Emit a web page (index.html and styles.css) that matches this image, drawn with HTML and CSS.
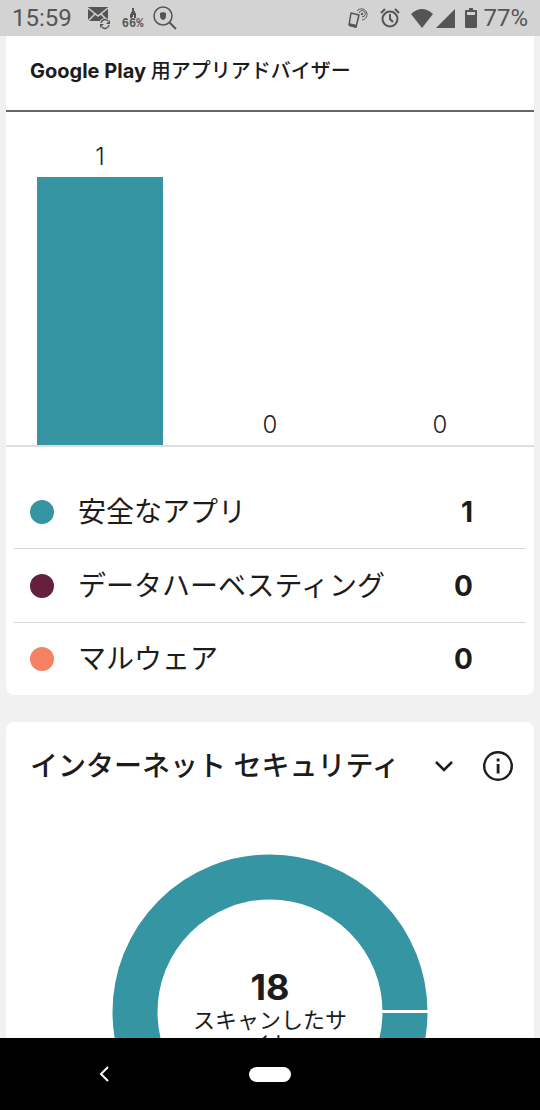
FILE: index.html
```html
<!DOCTYPE html>
<html lang="ja">

<head>
  <meta charset="UTF-8">
  <meta name="viewport" content="width=device-width, initial-scale=1.0">
  <title>アプリアドバイザー</title>
  <link rel="stylesheet" href="styles.css">
</head>

<body>
  <header class="status">
    <span class="time">15:59</span>
    <svg class="icon mail" width="24" height="24" viewBox="0 0 24 24">
      <path d="M1 1h20v14H1z" fill="#555" />
      <path d="M1 2l10 8 10-8M1 15l7-7M21 15l-7-7" fill="none" stroke="#d3d3d3" stroke-width="1.5" />
      <circle cx="18" cy="18" r="6" fill="#d3d3d3" />
      <path d="M14 17a4 4 0 0 1 7-2M22 19a4 4 0 0 1-7 2" fill="none" stroke="#555" stroke-width="1.5" />
      <path d="M23 14v4h-4zM13 22v-4h4z" fill="#555" />
    </svg>
    <span class="usage">
      <svg width="10" height="11" viewBox="0 0 10 11">
        <path d="M4 0h2v3h1v2h1v5H6V7H5v2H4v1H2V6h1V4h1z" fill="#555" />
      </svg>
      <b>66%</b>
    </span>
    <svg class="icon search" width="24" height="24" viewBox="0 0 24 24">
      <circle cx="10" cy="10" r="9" fill="none" stroke="#555" stroke-width="1.5" />
      <path d="M16 16l7 7" stroke="#555" stroke-width="2" />
      <path d="M10 6l3 1v3q0 3-3 4-3-1-3-4V7z" fill="#555" />
    </svg>
    <div class="right">
      <svg width="20" height="22" viewBox="0 0 20 22">
        <path d="M3 6l8 2-3 12-7-2z" fill="none" stroke="#555" stroke-width="1.5" stroke-linejoin="round" />
        <path d="M1 16l8 2-1 3-7-2z" fill="#555" />
        <circle cx="14" cy="7" r="1.2" fill="#555" />
        <path d="M11 6a3.2 3.2 0 1 1 3 4M9 4a5.6 5.6 0 1 1 5 9" fill="none" stroke="#555" />
      </svg>
      <svg class="alarm" width="20" height="20" viewBox="0 0 20 20">
        <circle cx="10" cy="11" r="7.5" fill="none" stroke="#555" stroke-width="2" />
        <path d="M10 6v5l3 3M1 5l4-4M19 5l-4-4" fill="none" stroke="#555" stroke-width="2" />
      </svg>
      <svg class="wifi" width="22" height="19" viewBox="0 0 22 19">
        <path d="M0 5q11-10 22 0L11 19z" fill="#555" />
      </svg>
      <svg class="signal" width="19" height="19" viewBox="0 0 19 19">
        <path d="M19 0v19H0z" fill="#555" />
      </svg>
      <svg class="battery" width="12" height="20" viewBox="0 0 12 20">
        <path d="M4 0h4v2h3q1 0 1 1v16q0 1-1 1H1q-1 0-1-1V3q0-1 1-1h3z" fill="#555" />
        <path d="M2 4h8v3H2z" fill="#d3d3d3" />
      </svg>
      <span class="percent">77%</span>
    </div>
  </header>

  <main class="content">
    <section class="card advisor">
      <h2>Google Play <span>用アプリアドバイザー</span></h2>
      <div class="chart">
        <div class="col">
          <span>1</span>
          <div class="bar" style="height: 268px"></div>
        </div>
        <div class="col"><span>0</span></div>
        <div class="col"><span>0</span></div>
      </div>
      <ul class="list">
        <li>
          <i class="dot safe"></i>
          <span class="text">安全なアプリ</span>
          <b>1</b>
        </li>
        <li>
          <i class="dot data"></i>
          <span class="text">データハーベスティング</span>
          <b>0</b>
        </li>
        <li>
          <i class="dot malware"></i>
          <span class="text">マルウェア</span>
          <b>0</b>
        </li>
      </ul>
    </section>

    <section class="card internet">
      <div class="head">
        <h2>インターネット セキュリティ</h2>
        <button class="toggle" aria-label="期間">
          <svg width="18" height="12" viewBox="0 0 18 12">
            <path d="M1 2l8 8 8-8" fill="none" stroke="#1c1c1c" stroke-width="2.6" />
          </svg>
        </button>
        <button class="info" aria-label="情報">
          <svg width="30" height="30" viewBox="0 0 30 30">
            <circle cx="15" cy="15" r="13.8" fill="none" stroke="#1c1c1c" stroke-width="2.4" />
            <path d="M13.7 7.6h2.8v2.8h-2.8zM13.7 13h2.8v9.5h-2.8z" fill="#1c1c1c" />
          </svg>
        </button>
      </div>
      <div class="donut">
        <svg width="316" height="316" viewBox="0 0 316 316">
          <circle cx="158" cy="158" r="135" fill="none" stroke="#3595a2" stroke-width="45" />
          <path d="M268 157.5h48" stroke="#fff" stroke-width="3" />
        </svg>
        <div class="total">
          <b>18</b>
          <p>スキャンしたサイト</p>
        </div>
      </div>
    </section>
  </main>

  <nav class="navbar">
    <button class="back" aria-label="戻る">
      <svg width="10" height="16" viewBox="0 0 10 16">
        <path d="M9 1L2 8l7 7" fill="none" stroke="#fff" stroke-width="2" />
      </svg>
    </button>
    <button class="home" aria-label="ホーム"></button>
    <span></span>
  </nav>
</body>

</html>
```
FILE: styles.css
```css
* {
  box-sizing: border-box;
  margin: 0;
  padding: 0;
}

body {
  display: flex;
  flex-direction: column;
  height: 100vh;
  overflow: hidden;
  background: #f1f1f1;
  color: #1c1c1c;
  font-family: Inter, "Noto Sans CJK JP", sans-serif;
}

svg {
  display: block;
}

button {
  border: none;
  background: none;
  cursor: pointer;
}

/* status bar */
.status {
  flex: none;
  display: flex;
  align-items: center;
  height: 36px;
  padding: 0 12px;
  background: #d3d3d3;
  color: #555;
  font-family: Roboto, sans-serif;
  font-size: 24px;
}

.status .mail {
  margin-left: 15px;
}

.status .usage {
  display: flex;
  flex-direction: column;
  align-items: center;
  margin: 0 10px 0 11px;
}

.status .usage b {
  font-family: "Liberation Mono", monospace;
  font-size: 12px;
  line-height: 10px;
}

.status .right {
  display: flex;
  align-items: center;
  margin-left: auto;
}

.status .alarm {
  margin: 0 11px 0 12px;
}

.status .signal {
  margin: 0 10px 0 3px;
}

.status .percent {
  margin-left: 6px;
}

/* cards */
.content {
  flex: 1;
  min-height: 0;
  overflow: hidden;
  padding: 0 6px;
}

.card {
  background: #fff;
  border-radius: 8px;
}

.advisor {
  border-radius: 0 0 8px 8px;
  margin-bottom: 27px;
}

.advisor h2 {
  padding: 20px 24px 24px;
  border-bottom: 2px solid #666;
  font-size: 20px;
  line-height: 30px;
}

.advisor h2 span {
  font-weight: 500;
}

.chart {
  display: flex;
  align-items: flex-end;
  height: 335px;
  padding: 0 9px;
  border-bottom: 2px solid #dedede;
}

.chart .col {
  flex: 1;
  display: flex;
  flex-direction: column;
  align-items: center;
  font-size: 24px;
  font-weight: 300;
  line-height: 40px;
}

.chart .bar {
  width: 74%;
  background: #3595a2;
}

.list {
  list-style: none;
  padding: 28px 8px 0;
}

.list li {
  display: flex;
  align-items: center;
  height: 74px;
  padding: 0 53px 0 16px;
  border-bottom: 1px solid #d6d6d6;
  font-size: 28px;
}

.list li:last-child {
  height: 72px;
  border-bottom: none;
}

.list .dot {
  width: 24px;
  height: 24px;
  margin-right: 24px;
  border-radius: 50%;
}

.list .safe {
  background: #3595a2;
}

.list .data {
  background: #66203f;
}

.list .malware {
  background: #f58263;
}

.list .text {
  flex: 1;
  padding-bottom: 4px;
}

/* internet security */
.internet .head {
  display: flex;
  align-items: center;
  padding: 24px 21px 0 24px;
}

.internet h2 {
  flex: 1;
  font-size: 28px;
  font-weight: 500;
  line-height: 40px;
  white-space: nowrap;
}

.internet .toggle {
  margin-right: 30px;
}

.donut {
  display: flex;
  justify-content: center;
  position: relative;
  padding: 68px 0 40px;
}

.donut .total {
  position: absolute;
  top: 180px;
  width: 168px;
  text-align: center;
}

.donut .total b {
  display: block;
  font-size: 36px;
  line-height: 42px;
}

.donut .total p {
  font-size: 22px;
  line-height: 24px;
}

/* android navigation */
.navbar {
  flex: none;
  display: grid;
  grid-template-columns: 1fr 42px 1fr;
  align-items: center;
  height: 72px;
  background: #000;
}

.navbar .back {
  justify-self: center;
  margin-right: 42px;
}

.navbar .home {
  height: 15px;
  border-radius: 8px;
  background: #fff;
}
```
